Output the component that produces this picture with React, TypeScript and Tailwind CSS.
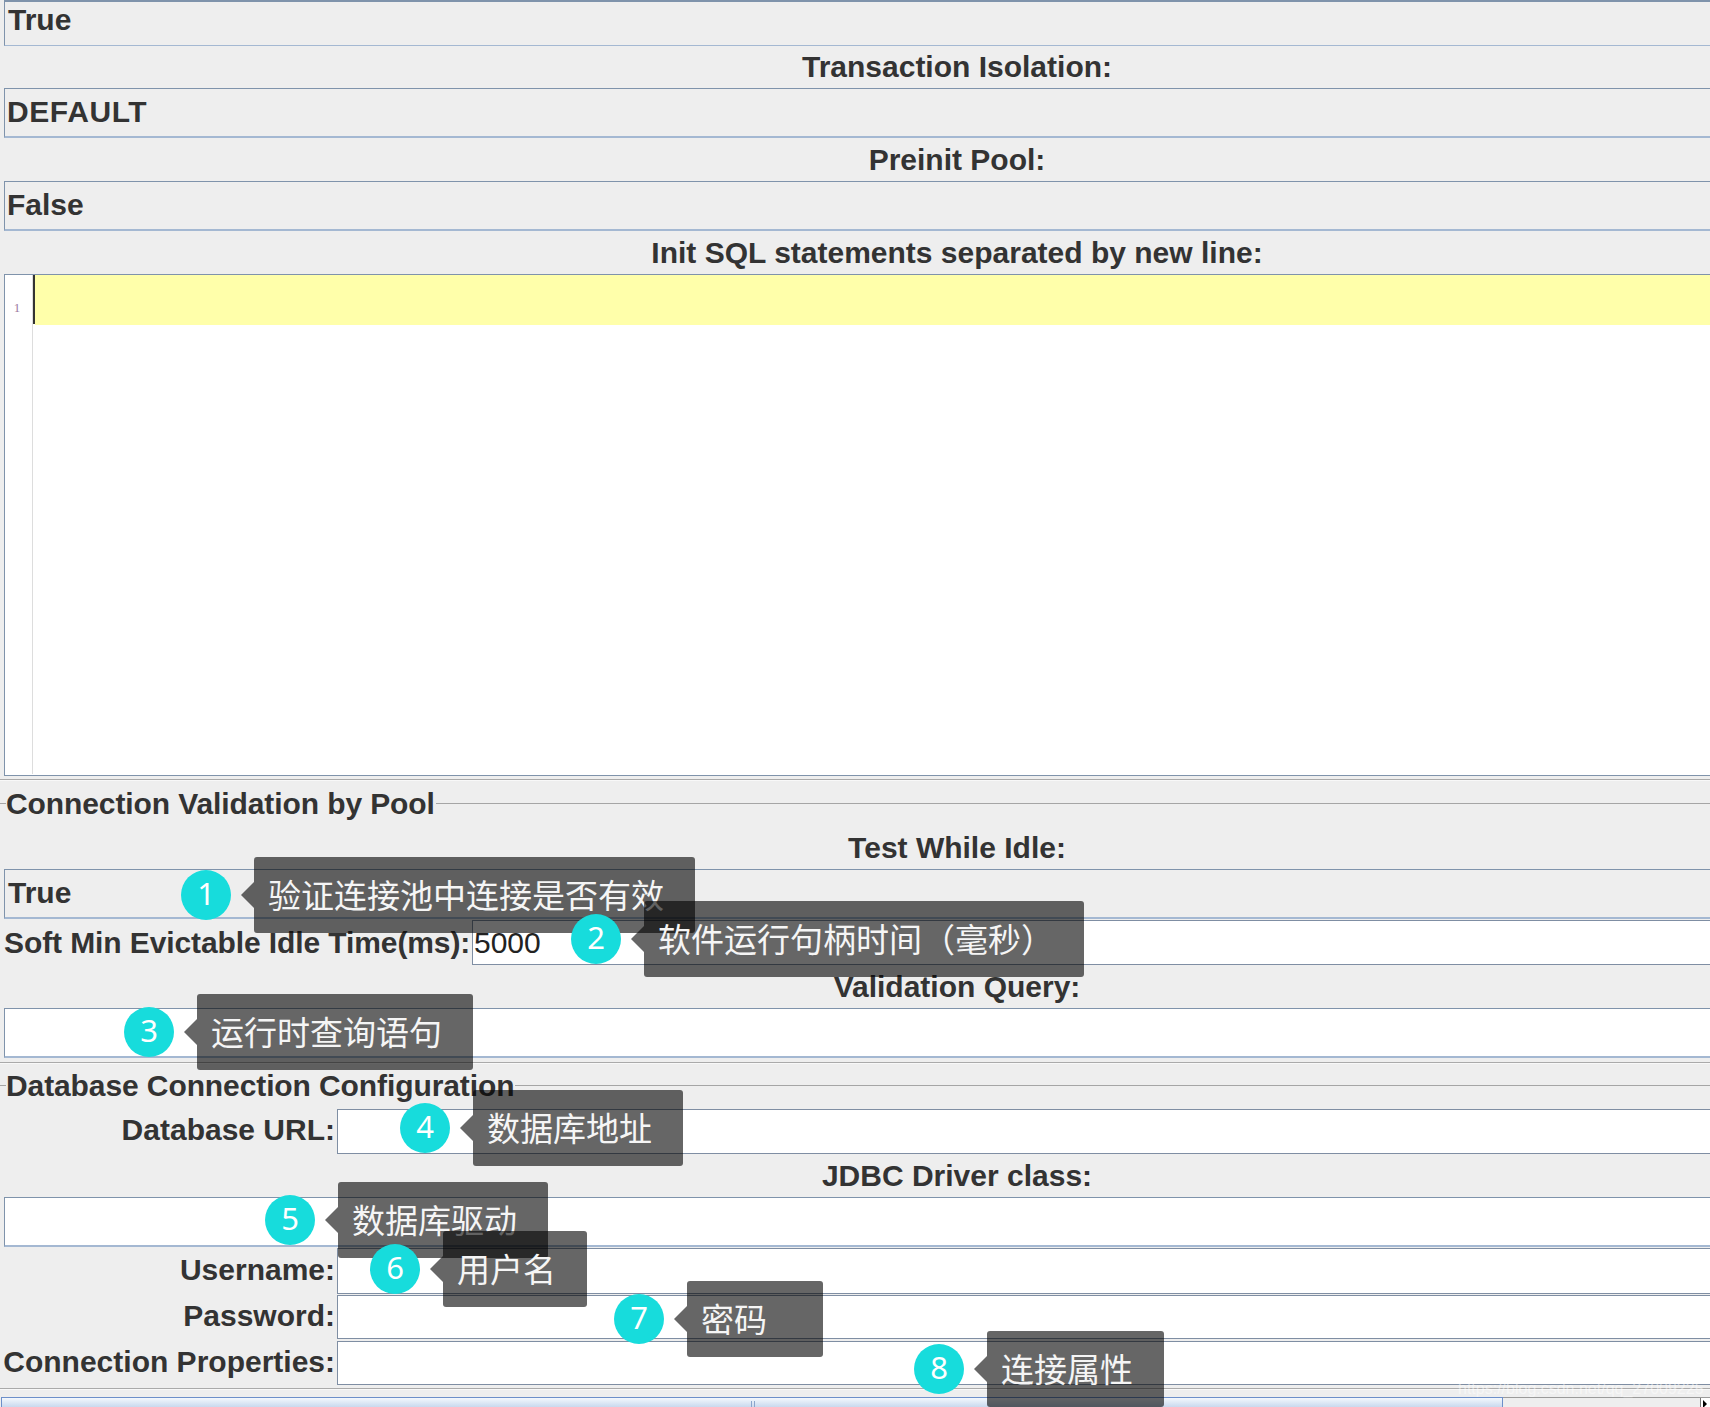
type NoteProps = {
  n: string
  text: string
  className: string
}

function Note({ n, text, className }: NoteProps) {
  return (
    <div className={`absolute flex h-[76px] items-center ${className}`}>
      <div className="mr-[10px] flex h-[50px] w-[50px] shrink-0 items-center justify-center rounded-full bg-[#17dcdc] pb-[3px] font-['Noto_Sans',sans-serif] text-[31px] font-normal text-white">
        {n}
      </div>
      <div className="h-0 w-0 shrink-0 border-y-[13px] border-r-[13px] border-y-transparent border-r-black/60" />
      <div className="flex h-full flex-1 items-center rounded-[3px] bg-black/60 pb-[1px] pl-[14px] font-['Noto_Sans_CJK_SC',sans-serif] text-[33px] font-normal whitespace-nowrap text-[#f5f5f5]">
        {text}
      </div>
    </div>
  )
}

function Label({ children, className = 'h-[43px]' }: { children: string; className?: string }) {
  return <div className={`flex items-center justify-center ${className}`}>{children}</div>
}

function Combo({ value, className = '' }: { value: string; className?: string }) {
  return (
    <div className={`ml-1 flex h-[50px] items-center border border-b-2 border-[#7f93ab] border-b-[#a4b8d2] pb-[3px] pl-[2px] ${className}`}>
      {value}
    </div>
  )
}

function Field({ label, className = '' }: { label: string; className?: string }) {
  return (
    <div className={`flex ${className}`}>
      <div className="flex w-[337px] shrink-0 items-center justify-end pr-[2px] pb-[4px] whitespace-nowrap">{label}</div>
      <div className="flex-1 border border-r-0 border-[#7f8ea3] bg-white" />
    </div>
  )
}

function Section({ title, className }: { title: string; className: string }) {
  return (
    <div className={`flex items-center ${className}`}>
      <div className="h-px w-[6px] bg-[#a5a5a5]" />
      <span className="pr-px tracking-[-0.1px]">{title}</span>
      <div className="h-px flex-1 bg-[#a5a5a5]" />
    </div>
  )
}

export default function App() {
  return (
    <div className="relative h-[1407px] w-[1710px] overflow-hidden bg-[#eeeeee] font-['Liberation_Sans',sans-serif] text-[30px] font-bold text-[#333333]">
      <div className="w-[1914px]">
        <div className="ml-1 flex h-[46px] items-center border border-t-2 border-[#7f93ab] border-b-[#a4b8d2] pb-[8px] pl-[3px]">True</div>
        <Label className="h-[42px] pb-[2px]">Transaction Isolation:</Label>
        <Combo value="DEFAULT" className="tracking-[0.6px]" />
        <Label>Preinit Pool:</Label>
        <Combo value="False" />
        <Label>Init SQL statements separated by new line:</Label>

        <div className="relative ml-1 h-[502px] border border-[#7f93ab] bg-white">
          <div className="flex h-[50px]">
            <div className="flex w-[28px] items-center justify-center border-r-[1px] border-[#dddddd] pt-[16px] pr-[3px] font-['Liberation_Serif',serif] text-[13px] font-normal text-[#9c7aa0]">
              1
            </div>
            <div className="h-[49px] w-[2px] bg-[#333333]" />
            <div className="flex-1 bg-[#ffffaa]" />
          </div>
          <div className="h-[449px] w-[28px] border-r-[1px] border-[#dddddd]" />
        </div>

        <div className="mt-[3px] h-[2px] border-t border-[#aaaaaa] bg-white/60" />
        <Section title="Connection Validation by Pool" className="h-[45px]" />
        <Label>Test While Idle:</Label>
        <Combo value="True" className="pl-[3px]" />

        <div className="mt-px flex h-[45px]">
          <div className="flex w-[472px] shrink-0 items-center pl-1 whitespace-nowrap tracking-[-0.1px]">
            Soft Min Evictable Idle Time(ms):
          </div>
          <div className="flex flex-1 items-center border border-r-0 border-[#7f8ea3] bg-white pl-[1px] font-normal text-[#222222]">
            5000
          </div>
        </div>

        <Label>Validation Query:</Label>
        <div className="ml-1 h-[50px] border border-b-2 border-[#7f93ab] border-b-[#a4b8d2] bg-white" />

        <div className="mt-[4px] h-[2px] border-t border-[#aaaaaa] bg-white/60" />
        <Section title="Database Connection Configuration" className="h-[45px] pb-[2px]" />
        <Field label="Database URL:" className="h-[45px]" />
        <Label>JDBC Driver class:</Label>
        <div className="ml-1 h-[50px] border border-b-2 border-[#7f93ab] border-b-[#a4b8d2] bg-white" />
        <Field label="Username:" className="mt-px h-[46px]" />
        <Field label="Password:" className="mt-px h-[44px]" />
        <Field label="Connection Properties:" className="mt-[2px] h-[44px]" />
        <div className="mt-[3px] h-[2px] border-t border-[#aaaaaa] bg-white/60" />
      </div>

      {/* bottom scroll bar */}
      <div className="absolute top-[1397px] left-0 flex h-[10px] w-[1710px]">
        <div className="w-[2px] border-r border-[#6d8fc9]" />
        <div className="relative w-[1501px] border-t border-r border-[#6d8fc9] bg-gradient-to-b from-[#f4f8fd] to-[#c9d9ee]">
          <div className="absolute top-[3px] left-[749px] h-[7px] w-[4px] border-x border-[#8aa5cc]" />
        </div>
        <div className="flex flex-1 justify-end border-t border-[#9a9a9a] bg-[#eeeeee]">
          <div className="w-[10px] border-l border-[#777777] bg-white">
            <div className="mt-[2px] ml-[2px] h-0 w-0 border-y-[4px] border-l-[4px] border-y-transparent border-l-black" />
          </div>
        </div>
      </div>

      <Note n="1" text="验证连接池中连接是否有效" className="top-[857px] left-[181px] w-[514px]" />
      <Note n="2" text="软件运行句柄时间（毫秒）" className="top-[901px] left-[571px] w-[513px]" />
      <Note n="3" text="运行时查询语句" className="top-[994px] left-[124px] w-[349px]" />
      <Note n="4" text="数据库地址" className="top-[1090px] left-[400px] w-[283px]" />
      <Note n="5" text="数据库驱动" className="top-[1182px] left-[265px] w-[283px]" />
      <Note n="6" text="用户名" className="top-[1231px] left-[370px] w-[217px]" />
      <Note n="7" text="密码" className="top-[1281px] left-[614px] w-[209px]" />
      <Note n="8" text="连接属性" className="top-[1331px] left-[914px] w-[250px]" />

      <div className="absolute top-[1377px] left-[1458px] text-[16px] font-normal whitespace-nowrap text-white/50">
        https://blog.csdn.net/qq_27009225
      </div>
    </div>
  )
}
